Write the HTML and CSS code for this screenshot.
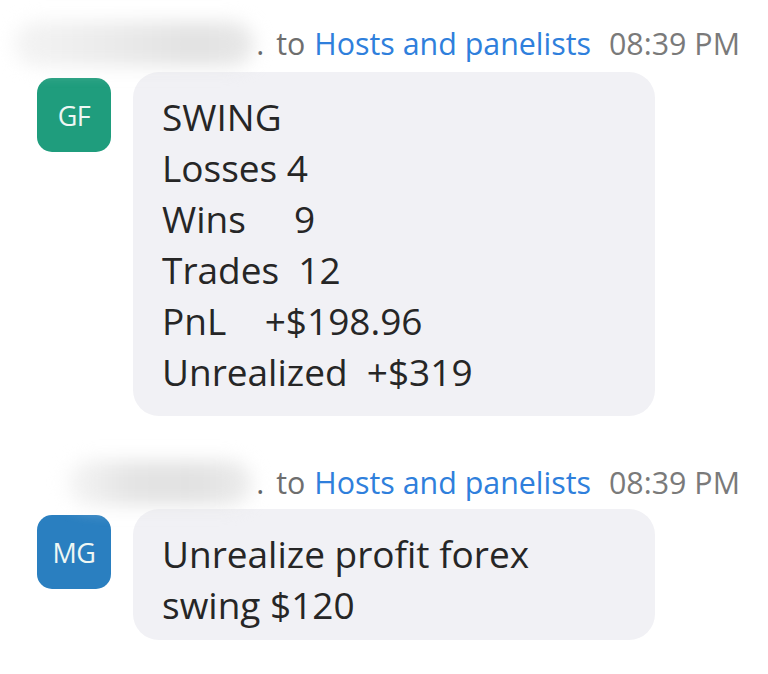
FILE: index.html
```html
<!DOCTYPE html>
<html lang="en">
<head>
<meta charset="utf-8">
<title>Chat</title>
<link rel="stylesheet" href="styles.css">
</head>
<body>
<div class="chat">
  <div class="message">
    <div class="meta">
      <span class="blur blur-one"></span>
      <span class="dot">.</span>
      <span class="to">to</span>
      <span class="recipient">Hosts and panelists</span>
      <span class="time">08:39 PM</span>
    </div>
    <div class="row">
      <div class="avatar avatar-green">GF</div>
      <div class="bubble">SWING
Losses 4
Wins     9
Trades  12
PnL    +$198.96
Unrealized  +$319</div>
    </div>
  </div>
  <div class="message message-second">
    <div class="meta">
      <span class="blur blur-two"></span>
      <span class="dot">.</span>
      <span class="to">to</span>
      <span class="recipient">Hosts and panelists</span>
      <span class="time">08:39 PM</span>
    </div>
    <div class="row row-second">
      <div class="avatar avatar-blue">MG</div>
      <div class="bubble bubble-short">Unrealize profit forex
swing $120</div>
    </div>
  </div>
</div>
</body>
</html>
```

FILE: styles.css
```css
html, body {
  margin: 0;
  padding: 0;
  background: #ffffff;
}

body {
  font-family: "Open Sans", "Noto Sans", sans-serif;
  color: #262626;
  width: 768px;
  height: 674px;
  overflow: hidden;
}

.chat {
  display: flex;
  flex-direction: column;
  padding-top: 27px;
}

.message-second {
  margin-top: 50px;
}

.meta {
  display: flex;
  align-items: baseline;
  justify-content: flex-end;
  padding-right: 28px;
  font-size: 30.4px;
  line-height: 34px;
  color: #6e6e6e;
}

.blur {
  display: block;
  align-self: center;
  height: 44px;
  margin: -10px 0;
  border-radius: 22px;
  background: #e4e4e4;
  filter: blur(9px);
}

.blur-one {
  width: 240px;
  margin-right: 2px;
  background: linear-gradient(90deg, #f4f4f4 0%, #ebebeb 40%, #e2e2e2 75%, #e8e8e8 100%);
}

.blur-two {
  width: 185px;
  margin-right: 4px;
  background: linear-gradient(90deg, #f6f6f6 0%, #e4e4e4 35%, #e2e2e2 70%, #ececec 100%);
}

.dot {
  color: #555;
}

.to {
  margin-left: 12px;
}

.recipient {
  margin-left: 9px;
  color: #2f7fdc;
}

.time {
  margin-left: 18px;
  color: #7a7a7a;
}

.row {
  display: flex;
  align-items: flex-start;
  gap: 22px;
  padding-left: 37px;
  margin-top: 11px;
}

.row-second {
  margin-top: 9px;
}

.avatar {
  flex: none;
  width: 74px;
  height: 74px;
  margin-top: 6px;
  border-radius: 15px;
  display: flex;
  align-items: center;
  justify-content: center;
  color: #eef7f4;
  font-size: 27px;
  letter-spacing: -0.5px;
}

.avatar-green {
  background: #1f9d7d;
}

.avatar-blue {
  background: #2a7fc0;
}

.bubble {
  width: 464px;
  padding: 19px 29px 19px;
  background: #f1f1f5;
  border-radius: 26px;
  font-size: 37px;
  line-height: 51px;
  white-space: pre;
}

.bubble-short {
  padding-top: 19px;
  padding-bottom: 10px;
}
```
